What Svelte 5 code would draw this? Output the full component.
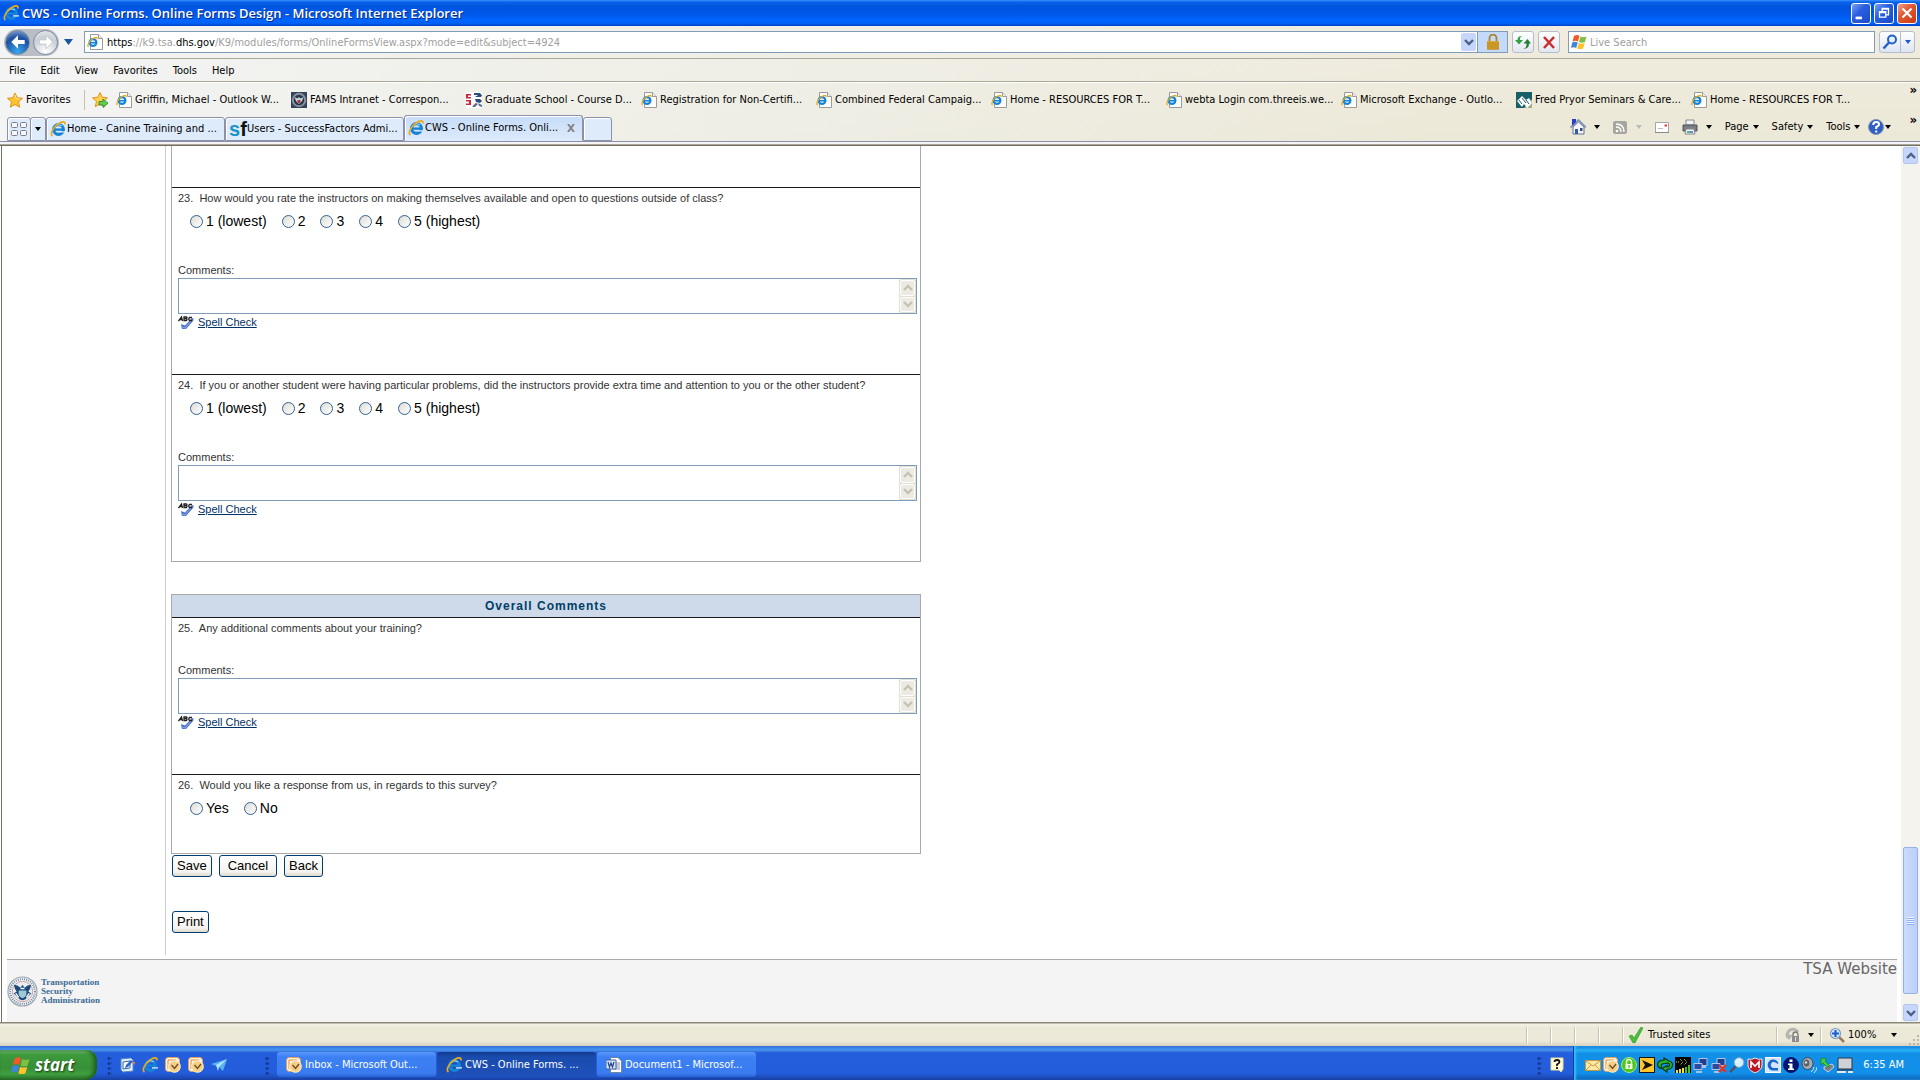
<script>
  const menus = ['File', 'Edit', 'View', 'Favorites', 'Tools', 'Help'];
  const favorites = [
    ['page', 'Griffin, Michael - Outlook W...'],
    ['seal', 'FAMS Intranet - Correspon...'],
    ['grad', 'Graduate School - Course D...'],
    ['page', 'Registration for Non-Certifi...'],
    ['page', 'Combined Federal Campaig...'],
    ['page', 'Home - RESOURCES FOR T...'],
    ['page', 'webta Login com.threeis.we...'],
    ['page', 'Microsoft Exchange - Outlo...'],
    ['pryor', 'Fred Pryor Seminars & Care...'],
    ['page', 'Home - RESOURCES FOR T...']
  ];
  const tabs = [
    ['ie', 'Home - Canine Training and ...', false],
    ['sf', 'Users - SuccessFactors Admi...', false],
    ['ie', 'CWS - Online Forms. Onli...', true]
  ];
  const tasks = [
    ['outlook', 'Inbox - Microsoft Out...', false],
    ['ie', 'CWS - Online Forms. ...', true],
    ['word', 'Document1 - Microsof...', false]
  ];
  const scale = ['1 (lowest)', '2', '3', '4', '5 (highest)'];
  const ratings = [
    { n: 23, text: 'How would you rate the instructors on making themselves available and open to questions outside of class?', options: scale, comments: true },
    { n: 24, text: 'If you or another student were having particular problems, did the instructors provide extra time and attention to you or the other student?', options: scale, comments: true }
  ];
  const overall = [
    { n: 25, text: 'Any additional comments about your training?', options: [], comments: true },
    { n: 26, text: 'Would you like a response from us, in regards to this survey?', options: ['Yes', 'No'], comments: false }
  ];
  const tray = ['mail', 'outlook', 'lock', 'norton', 'sync', 'signal', 'net', 'netoff', 'lens', 'shield', 'swirl', 'info', 'sound', 'eject', 'screen'];
</script>

{#snippet icon(kind)}
  <svg class="icon" viewBox="0 0 16 16" aria-hidden="true">
    {#if kind === 'ie'}
      <circle cx="8.5" cy="8.5" r="4.9" fill="none" stroke="#1583d8" stroke-width="3.2" />
      <path d="M4 8.6h10" stroke="#1583d8" stroke-width="2.4" />
      <path d="M10 10.300h6v1.200h-6z" fill="#eaf3fc" />
      <path d="M5 5.5Q8 2.5 12 5" stroke="#7fd0ff" stroke-width="1.2" fill="none" />
      <path d="M2.5 15C-.5 13 3 6.500 8 3S15.500.5 14.800 3.500" fill="none" stroke="#e9ab1c" stroke-width="1.7" />
    {:else if kind === 'page'}
      <path d="M3.500.5h8l4 4v11h-12z" fill="#fff" stroke="#9a9a9a" />
      <path d="M11.500.5v4h4" fill="#eee" stroke="#9a9a9a" />
      <circle cx="6" cy="8.500" r="3.400" fill="none" stroke="#1583d8" stroke-width="2.200" />
      <path d="M3 8.700h6.500" stroke="#1583d8" stroke-width="1.700" />
      <path d="M1.500 13C-.5 11.500 3 6 6 4.500S10.500 3 10 5" fill="none" stroke="#e9ab1c" stroke-width="1.300" />
    {:else if kind === 'seal'}
      <path fill="#34435e" d="M0 0h16v16H0z" /><circle cx="8" cy="8" r="7.200" fill="#8b929c" />
      <circle cx="8" cy="8" r="5.200" fill="#26364f" />
      <path d="M3.500 5l3 1.500L8 5l1.500 1.500 3-1.500-1.500 4-3 3-3-3z" fill="#cfd5dc" /><path d="M6.500 8h3v2L8 11.500 6.500 10z" fill="#a33" />
    {:else if kind === 'grad'}
      <path fill="#fff" d="M0 0h16v16H0z" /><path d="M0 2h5v1.500H2v1.500h3v1.500H0zM0 8h5v5H0v-1.500h3V9.500H0z" fill="#c8283c" />
      <path d="M8 1h6l2 2.500-1 1.500H9l3-2H8zM9 7h5l2 2-2 2-4-1z" fill="#2b4c7c" /><path d="M6 15l4-4 2 1-3 3zM12 11l4 2v2l-3-1z" fill="#5b6f96" /><path d="M7 14l3-3" stroke="#d55" />
    {:else if kind === 'pryor'}
      <path fill="#176067" d="M0 0h16v16H0z" /><path fill="#a9ab80" d="M8 16l8-9v9z" /><path d="M1 9l5-5 4 4 3-2 3 5-5 5-3-4-2 3z" fill="#fff" /><path d="M3 8l3 4m0-6l4 5m0-3l3 4" stroke="#176067" />
    {:else if kind === 'outlook'}
      <rect x=".5" y=".5" width="14" height="14" rx="3" fill="#fff3dd" stroke="#e2a060" />
      <path d="M3 12V3h8" fill="none" stroke="#e08838" />
      <circle cx="9.500" cy="9.500" r="5.800" fill="#f6cf86" stroke="#fdf2d8" /><path d="M6.500 8l3 3.500L13 7" fill="none" stroke="#705022" stroke-width="1.400" />
    {:else if kind === 'word'}
      <path d="M4.500.5H12l3.500 3.500v11.500h-11z" fill="#fff" stroke="#7181a8" /><path d="M8 6h6M8 8h6M7 10h7M7 12h7" stroke="#8595b5" />
      <path d="M0 3h10v9H0z" fill="#dce6f7" stroke="#41619e" /><path d="M2 5l1.500 5L5 6l1.500 4L8 5" fill="none" stroke="#234b91" stroke-width="1.300" />
    {:else if kind === 'mail'}
      <path d="M.5 3.500h15v10H.5z" fill="#fbe8a5" stroke="#c09644" /><path d="M1 4l7 5 7-5M1 13l5-5m9 5l-5-5" fill="none" stroke="#cc9b45" />
    {:else if kind === 'lock'}
      <circle cx="8" cy="8" r="7.500" fill="#4bc71f" stroke="#a6e777" /><path d="M5.500 7V5a2.500 2.500 0 015 0v2" stroke="#eefbd8" stroke-width="1.500" fill="none" /><path d="M4.500 7h7v5h-7z" fill="#f2ffe0" /><path d="M8 8v3" stroke="#398b18" />
    {:else if kind === 'norton'}
      <path fill="#151515" d="M0 0h16v16H0z" /><path d="M1 1h14v14H1z" fill="#ffc52a" /><path d="M3 3l11 5-11 5 3-5z" fill="#111" />
    {:else if kind === 'sync'}
      <path d="M3 11.500q-4-3-1.500-6.500Q3 3 7 3V1l5 3q4 1 3.500 4.500Q15 12 10 12.500V15L5 11.500l5-3v1.500q3-.5 2.500-2.500T8 6.500Q3 6.500 4.500 10z" fill="#29b02f" stroke="#063b0e" stroke-width="1.200" />
    {:else if kind === 'signal'}
      <path fill="#050505" d="M0 0h16v16H0z" /><path d="M1 5h3m1-3l3 3-3 3M9 2l3 3-3 3" stroke="#d5e23c" stroke-dasharray="1 1" fill="none" /><path d="M2 16v-3m3 3v-4m3 4v-5" stroke="#f4e52c" stroke-width="2" /><path d="M11 16v-6m3 6V8" stroke="#43c22f" stroke-width="2" />
    {:else if kind === 'net' || kind === 'netoff'}
      <path d="M6 1.500h8v7H6z" fill="#203e94" stroke="#b4c4db" /><path d="M1 6.500h8v6H1z" fill="#284ba3" stroke="#b4c4db" /><path d="M3 15h6M9 10h4" stroke="#d2d8e4" stroke-width="1.600" />
      {#if kind === 'netoff'}<path d="M8 8l7 7m0-7l-7 7" stroke="#e43124" stroke-width="2.200" />{/if}
    {:else if kind === 'lens'}
      <path d="M1 15l6-6" stroke="#48556b" stroke-width="2.500" /><circle cx="10" cy="5.500" r="4.800" fill="#d4f0ff" stroke="#86a6c2" /><path d="M7.500 5q1-2.500 3-2.500" stroke="#fff" fill="none" />
    {:else if kind === 'shield'}
      <path d="M1 2q4 1 7-1 3 2 7 1v6q0 5-7 8-7-3-7-8z" fill="#b91824" stroke="#e9e9e9" /><path d="M4 11V5l4 4 4-4v6" fill="none" stroke="#fff" stroke-width="1.700" />
    {:else if kind === 'swirl'}
      <rect x=".5" y=".5" width="15" height="15" fill="#d3e6fb" stroke="#fff" /><path d="M13.500 7A5.500 5.500 0 108 13.500h5V11H9a3 3 0 112-5z" fill="#1d68cf" />
    {:else if kind === 'info' || kind === 'help'}
      <circle cx="8" cy="8" r="7.500" fill={kind === 'info' ? '#06156d' : '#2f5ec4'} stroke={kind === 'info' ? '#06156d' : '#8595b5'} />
      {#if kind === 'info'}<path d="M6.500 2.500h3v2.500h-3zM5 6.500h4.500v5H11V13H5v-1.500h1.500V8H5z" fill="#fff" />
      {:else}<path d="M5.200 6q0-3 3-3 2.800 0 2.800 2.300Q11 7 8.200 8v2M8.200 11.500v2" fill="none" stroke="#fff" stroke-width="2" />{/if}
    {:else if kind === 'sound'}
      <ellipse cx="6.500" cy="6.500" rx="5.500" ry="6" fill="#a8adb5" stroke="#3c434d" /><ellipse cx="5.500" cy="6" rx="2.800" ry="3.500" fill="#59616c" /><circle cx="5" cy="5.500" r="1.200" fill="#dde" /><path d="M10 15q3-2 3-5m0 6q3-3 3-6" stroke="#cfe1f5" fill="none" />
    {:else if kind === 'eject'}
      <path d="M5 10l8-3 2 3-6 5-4-3z" fill="#777f87" stroke="#ccd" /><path d="M2 1l6 1-2 2 5 5-3 1-4-4-2 2z" fill="#3bd13c" stroke="#16701e" stroke-width=".6" />
    {:else if kind === 'screen'}
      <path d="M1 1h14v11H1z" fill="#ced1d5" stroke="#26364f" /><path d="M0 15h9m2 0h5" stroke="#e7e7e7" stroke-width="2" /><path d="M0 13h16" stroke="#26364f" />
    {:else if kind === 'star'}
      <path d="M8 1l2.200 4.700 5.300.6-4 3.500 1.200 5.400L8 12.500l-4.700 2.700 1.200-5.400-4-3.500 5.300-.6z" fill="#ffc32d" stroke="#db8b17" stroke-width=".9" /><path d="M8 3l1 3.500 3.500.5" stroke="#ffeaa1" fill="none" />
    {:else if kind === 'addstar'}
      <path d="M8 .5l2.200 4.700 5.300.6-4 3.500 1.200 5.400L8 12l-4.700 2.700 1.200-5.400-4-3.500 5.300-.6z" fill="#ffd04a" stroke="#db8b17" stroke-width=".9" /><path d="M7 9.500h4V7l5 4.200-5 4.300v-2.500H7z" fill="#63cf4e" stroke="#24801d" stroke-width=".8" />
    {:else if kind === 'winflag'}
      <path d="M3 2q3-2 5.500 0L7 7.500Q4.500 6 1.500 7.500z" fill="#f05a28" /><path d="M9.500 2.500q3 1.500 6 0L14 8q-3 1.500-6 0z" fill="#7cc142" /><path d="M1.200 8.500Q4 7 6.700 8.500L5.200 14q-2.500-1.500-5.200 0z" fill="#3d85dd" /><path d="M7.700 9q3 1.500 6 0l-1.500 5.500q-3 1.500-6 0z" fill="#fcc32c" />
    {:else if kind === 'padlock'}
      <path d="M4.500 7V4a3.500 3.500 0 017 0v3" fill="none" stroke="#a8842c" stroke-width="1.800" /><path d="M2 7h12v8.500H2z" fill="#dca934" /><path d="M2 9h12M2 11h12M2 13h12M2 15h12" stroke="#b98318" />
    {:else if kind === 'refresh'}
      <path d="M8 2Q5 2 5 5v1h3L4 10.500 0 6h2.500Q2.500 1.500 8 2z" fill="#35a042" /><path d="M8 14.500q3.500 0 3.500-4V9.500H8.500l4-4.500 3.500 4.500h-2q0 6-6 5z" fill="#257d32" />
    {:else if kind === 'stop'}
      <path d="M3 3l10 11M13 3L3 14" stroke="#c92d2d" stroke-width="2.500" />
    {:else if kind === 'search'}
      <circle cx="10" cy="5.500" r="4" fill="#e4f0ff" stroke="#2360ce" stroke-width="2" /><path d="M7 8.500l-5.500 6" stroke="#2360ce" stroke-width="2.500" />
    {:else if kind === 'home'}
      <path d="M3 8v7h11V8L8.500 3z" fill="#f3f5f9" stroke="#64728e" /><path d="M.5 8.500L8.500 1 16 8.500" fill="none" stroke="#8796b4" stroke-width="1.800" /><path d="M2 0h4v3L3 6H2z" fill="#2d3fc1" /><path d="M5 10h3v5H5z" fill="#3159b5" /><path d="M10 9h2.500v3H10z" fill="#3b4b76" />
    {:else if kind === 'rss'}
      <rect x="1" y="2" width="14" height="13" rx="2" fill="#a6a69f" /><circle cx="5" cy="12" r="1.300" fill="#fff" /><path d="M4 8q5 0 5 5M4 5q8 0 8 8" fill="none" stroke="#fff" stroke-width="1.400" />
    {:else if kind === 'letter'}
      <path d="M1.500 3.500h13v10h-13z" fill="#fff" stroke="#a6a6b0" /><path d="M10.500 5.500h2.500v2h-2.500z" fill="#d53a3a" /><path d="M4 9.500h5" stroke="#bbb" /><path d="M1 13.500h14" stroke="#888" />
    {:else if kind === 'printer'}
      <path d="M4 1h8v5H4z" fill="#f4f4f8" stroke="#8a8a92" /><path d="M1 6h14v6H1z" fill="#7b7e85" stroke="#4e5158" /><path d="M4 10h8l1 5H3z" fill="#eef5ff" stroke="#888" /><path d="M5 13h3" stroke="#3a9a4a" stroke-width="1.500" /><path d="M8 13h3" stroke="#3468c4" stroke-width="1.500" />
    {:else if kind === 'desktop'}
      <path d="M2 2l10-1 2 2v11L4 15l-2-2z" fill="#e5effb" stroke="#568bc6" /><path d="M4 5l7-1v7l-7 1z" fill="#fff" stroke="#3267a8" /><path d="M6 11l1-3 5-5 2 1.500-5 5.500z" fill="#2d67c5" /><path d="M13 5h3v3z" fill="#ee7b32" />
    {:else if kind === 'plane'}
      <path d="M0 7L16 2 12 14 8 10z" fill="#57b4f4" /><path d="M5 8l11-6-8 8-1 4z" fill="#b6e4ff" />
    {:else if kind === 'note'}
      <path d="M2 1h12v11l-2 3-2-2H2z" fill="#fffbd8" stroke="#e4dc9c" /><path d="M5.500 5q0-2 2.500-2t2.500 2Q10.500 6 8 7.500V9M8 10v2" stroke="#111" stroke-width="1.800" fill="none" />
    {:else if kind === 'check'}
      <path d="M1 9l3-1 2 3L13 0l2 1L7 16H5z" fill="#4dbb3d" stroke="#2a9a27" stroke-width=".6" />
    {:else if kind === 'zone'}
      <path d="M3 11a5.500 5.500 0 0110-6" fill="none" stroke="#b5b5b0" stroke-width="3" /><path d="M0 7l4 6 4-5z" fill="#b5b5b0" /><path d="M8 10V7.500a2.500 2.500 0 015 0V10" fill="none" stroke="#777" stroke-width="1.300" /><path d="M7 9h7v6H7z" fill="#8d8d8d" /><path d="M10.500 10v4" stroke="#ddd" />
    {:else if kind === 'zoom'}
      <path d="M9 9l6 6" stroke="#9b7c58" stroke-width="2.500" /><circle cx="6.500" cy="6.500" r="5" fill="#d8edff" stroke="#7e9abf" stroke-width="1.200" /><path d="M6.500 3v7M3 6.500h7" stroke="#1960ce" stroke-width="2.200" />
    {:else if kind === 'quick'}
      <g fill="#f5f7fb" stroke="#7c7f91"><rect x=".5" y="1.500" width="6" height="5" rx="1" /><rect x="9.500" y="1.500" width="6" height="5" rx="1" /><rect x=".5" y="9.500" width="6" height="5" rx="1" /><rect x="9.500" y="9.500" width="6" height="5" rx="1" /></g>
    {:else if kind === 'spell'}
      <path d="M3 10l4 1.500L14 4l1.500.5v2L8 15H4z" fill="#4d75ca" /><path d="M3 13l4 1 7-8" fill="none" stroke="#8fa9e4" />
      <path d="M.5 7l3-4 1 4M2 5.500h2.500M6 3v3.500h2.500q1-1 0-1.800H6h2.500q1-1 0-1.700zM14 3.500h-2.500q-1.500 1.500 0 3H14" fill="none" stroke="#222" stroke-width="1.300" />
    {/if}
  </svg>
{/snippet}

{#snippet chevron(dir)}
  <svg class="chev" viewBox="0 0 10 8" aria-hidden="true"><path d={dir === 'up' ? 'M1 6l4-4 4 4' : 'M1 2l4 4 4-4'} fill="none" stroke="currentColor" stroke-width="2.400" /></svg>
{/snippet}

{#snippet caret()}
  <svg class="caret" viewBox="0 0 6 4" aria-hidden="true"><path d="M0 0h6L3 4z" fill="currentColor" /></svg>
{/snippet}

{#snippet question(q)}
  <section class="question">
    <p class="ask" id={'q' + q.n}>{q.n}.&nbsp; {q.text}</p>
    {#if q.options.length}
      <div class="options" role="radiogroup" aria-labelledby={'q' + q.n}>
        {#each q.options as option}
          <label><input type="radio" name={'rating' + q.n} value={option} />{option}</label>
        {/each}
      </div>
    {/if}
    {#if q.comments}
      <div class="comments">
        <label for={'c' + q.n}>Comments:</label>
        <div class="field">
          <textarea id={'c' + q.n}></textarea>
          <div class="steps">
            <button type="button" disabled aria-label="Scroll up">{@render chevron('up')}</button>
            <button type="button" disabled aria-label="Scroll down">{@render chevron('down')}</button>
          </div>
        </div>
        <a class="spell" href="#spell">{@render icon('spell')}<span>Spell Check</span></a>
      </div>
    {/if}
  </section>
{/snippet}

<div class="window">
  <header class="title">
    {@render icon('ie')}
    <h1>CWS - Online Forms. Online Forms Design - Microsoft Internet Explorer</h1>
    <div class="controls">
      <button aria-label="Minimize"><svg viewBox="0 0 20 20"><path d="M4 14h7v3H4z" fill="#fff" /></svg></button>
      <button aria-label="Restore"><svg viewBox="0 0 20 20"><path d="M8 8V5h7v7h-3M8 5.500h7M5 8.500h7v6H5zM5 9.500h7" fill="none" stroke="#fff" stroke-width="1.500" /></svg></button>
      <button class="close" aria-label="Close"><svg viewBox="0 0 20 20"><path d="M5 5l10 10M15 5L5 15" stroke="#fff" stroke-width="2.400" /></svg></button>
    </div>
  </header>

  <div class="chrome">
    <div class="address">
      <div class="travel">
        <button class="go back" aria-label="Back"><svg viewBox="0 0 24 24"><path d="M12 4l-8 8 8 8v-5.500h8v-5h-8z" fill="#fff" /></svg></button>
        <button class="go next" aria-label="Forward"><svg viewBox="0 0 24 24"><path d="M12 4l8 8-8 8v-5.500H4v-5h8z" fill="#fff" stroke="#bcc3cc" /></svg></button>
      </div>
      <button class="recent" aria-label="Recent pages">{@render caret()}</button>
      <div class="url">
        {@render icon('page')}
        <a href="#address" class="link"><b>https</b>://k9.tsa.<b>dhs.gov</b>/K9/modules/forms/OnlineFormsView.aspx?mode=edit&amp;subject=4924</a>
        <button class="drop" aria-label="Address history">{@render chevron('down')}</button>
        <button class="secure" aria-label="Security report">{@render icon('padlock')}</button>
      </div>
      <button class="tool" aria-label="Refresh">{@render icon('refresh')}</button>
      <button class="tool" aria-label="Stop">{@render icon('stop')}</button>
      <div class="live">{@render icon('winflag')}<input type="text" placeholder="Live Search" aria-label="Live Search" /></div>
      <div class="find">
        <button aria-label="Search">{@render icon('search')}</button><button class="slim" aria-label="Search options">{@render caret()}</button>
      </div>
    </div>

    <nav class="menus">
      {#each menus as m}<button>{m}</button>{/each}
    </nav>

    <nav class="favs">
      <button class="favbtn">{@render icon('star')}Favorites</button>
      <button class="add" aria-label="Add to Favorites Bar">{@render icon('addstar')}</button>
      {#each favorites as [kind, label]}
        <a class="fav" href="#favorite">{@render icon(kind)}<span>{label}</span></a>
      {/each}
      <button class="more" aria-label="More favorites">»</button>
    </nav>

    <div class="tabrow">
      <div class="tabs">
        <button class="tab quick" aria-label="Quick tabs">{@render icon('quick')}</button>
        <button class="tab list" aria-label="Tab list">{@render caret()}</button>
        {#each tabs as [kind, label, active]}
          <div class="tab wide" class:active>
            {#if kind === 'sf'}<span class="sf" aria-hidden="true">s<b>f</b></span>{:else}{@render icon(kind)}{/if}
            <a href="#tab">{label}</a>
            {#if active}<button class="x" aria-label="Close tab"><svg viewBox="0 0 8 8"><path d="M1 0l6 8M7 0L1 8" stroke="#858585" stroke-width="2" /></svg></button>{/if}
          </div>
        {/each}
        <button class="tab new" aria-label="New tab"></button>
      </div>
      <div class="commands">
        <button aria-label="Home page">{@render icon('home')}{@render caret()}</button>
        <button class="dim" aria-label="Feeds">{@render icon('rss')}{@render caret()}</button>
        <button aria-label="Read mail">{@render icon('letter')}</button>
        <button aria-label="Print">{@render icon('printer')}{@render caret()}</button>
        <button class="word">Page{@render caret()}</button>
        <button class="word">Safety{@render caret()}</button>
        <button class="word">Tools{@render caret()}</button>
        <button class="word help" aria-label="Help">{@render icon('help')}{@render caret()}</button>
        <button class="more" aria-label="More commands">»</button>
      </div>
    </div>
  </div>

  <div class="view">
    <main>
      <div class="columns">
        <div class="side"></div>
        <form class="survey">
          <div class="box rest">
            <div class="remnant"></div>
            {#each ratings as q}{@render question(q)}{/each}
          </div>
          <div class="box">
            <h2>Overall Comments</h2>
            {#each overall as q}{@render question(q)}{/each}
          </div>
          <div class="actions">
            <button type="button">Save</button><button type="button" class="mid">Cancel</button><button type="button">Back</button>
          </div>
          <div class="actions print"><button type="button">Print</button></div>
        </form>
      </div>
      <footer>
        <div class="brand">
          <svg viewBox="0 0 32 32" aria-hidden="true">
            <circle cx="16" cy="16" r="15" fill="#f2f4f6" stroke="#9ba5ad" stroke-width="1.200" />
            <circle cx="16" cy="16" r="12.800" fill="none" stroke="#6487a4" stroke-width="2" stroke-dasharray="1 1.200" />
            <circle cx="16" cy="16" r="10.500" fill="#e8eef2" stroke="#d29b9b" />
            <path d="M7 9q4 0 7 3l2-3 2 3q3-3 7-3-1 5-3 7l3 2-6 6q-3 2-6 0l-6-6 3-2Q8 14 7 9z" fill="#1d4a7a" />
            <path d="M12 15h8v4q-1 3-4 4-3-1-4-4z" fill="#9fc9d6" /><path d="M9 18l3 4m11-4l-3 4M14 13h4" stroke="#fff" stroke-width="1.500" />
          </svg>
          <p>Transportation<br />Security<br />Administration</p>
        </div>
        <a href="#tsa">TSA Website</a>
      </footer>
    </main>
    <div class="scroll">
      <button aria-label="Scroll page up">{@render chevron('up')}</button>
      <div class="thumb"><i></i></div>
      <button aria-label="Scroll page down">{@render chevron('down')}</button>
    </div>
  </div>

  <div class="status">
    <span class="cell"></span><span class="cell"></span><span class="cell"></span><span class="cell"></span>
    <span class="cell zone">{@render icon('check')}Trusted sites</span>
    <button class="cell prot" aria-label="Protection">{@render icon('zone')}{@render caret()}</button>
    <button class="cell level">{@render icon('zoom')}<span>100%</span>{@render caret()}</button>
    <svg class="grip" viewBox="0 0 12 12" aria-hidden="true"><path d="M9 1h2v2H9zM9 5h2v2H9zM9 9h2v2H9zM5 5h2v2H5zM5 9h2v2H5zM1 9h2v2H1z" fill="#bcb8a5" /></svg>
  </div>

  <div class="taskbar">
    <button class="start">{@render icon('winflag')}<span>start</span></button>
    <div class="dots"></div>
    <div class="launch">
      {#each ['desktop', 'ie', 'outlook', 'outlook', 'plane'] as k}<button aria-label={'Launch ' + k}>{@render icon(k)}</button>{/each}
    </div>
    <div class="dots"></div>
    <div class="tasks">
      {#each tasks as [kind, label, on]}<button class:on>{@render icon(kind)}<span>{label}</span></button>{/each}
    </div>
    <div class="dots"></div>
    <button class="note" aria-label="Help note">{@render icon('note')}</button>
    <div class="tray">
      {#each tray as k}{@render icon(k)}{/each}
      <time>6:35 AM</time>
    </div>
  </div>
</div>

<style>
  :global(body) { margin: 0; background: #fff; }
  .window {
    display: flex; flex-direction: column; min-height: 100vh; overflow: hidden;
    font: 11px/14px "DejaVu Sans Condensed", "DejaVu Sans", sans-serif; color: #000;
  }
  .window * { box-sizing: border-box; }
  button { font: inherit; color: inherit; background: none; border: 0; padding: 0; margin: 0; display: flex; align-items: center; justify-content: center; white-space: nowrap; }
  a { color: inherit; text-decoration: none; }
  svg { display: block; flex: none; }
  .icon { width: 16px; height: 16px; }
  .caret { width: 6px; height: 4px; }
  .chev { width: 10px; height: 8px; color: #4d6185; }

  .title {
    display: flex; align-items: center; height: 26px; padding: 0 3px; gap: 3px; color: #fff;
    background: linear-gradient(#3a91ff 0, #0a62ea 8%, #0055e0 25%, #0058ea 55%, #0066ff 80%, #0060f4 90%, #0042c8);
  }
  h1 { flex: 1; margin: 0; font: 600 13px/18px "Open Sans", sans-serif; text-shadow: 1px 1px #0b2a84; }
  .controls { display: flex; gap: 3px; }
  .controls button { width: 20px; height: 21px; border: 1px solid #fff; border-radius: 3px; background: linear-gradient(135deg, #7ca2f2, #2a5fe0 40%, #1c49c6); }
  .controls .close { background: linear-gradient(135deg, #f2a18a, #e25a34 40%, #c93b12); }
  .controls svg { width: 18px; height: 18px; }

  .chrome { background: linear-gradient(to right, rgba(243, 244, 244, 1), rgba(240, 240, 234, .9) 30%, rgba(236, 233, 216, 0) 75%), linear-gradient(#f0ede0, #ebe8d7); border-bottom: 1px solid #716f64; }
  .address { display: flex; align-items: center; height: 33px; padding: 0 5px 0 4px; border-bottom: 1px solid #aca899; }
  .travel { display: flex; gap: 3px; padding: 1px; border-radius: 16px; background: #b9bdc4; }
  .go { width: 25px; height: 25px; border-radius: 50%; border: 1px solid #7e8ba2; }
  .go svg { width: 20px; height: 20px; }
  .back { background: radial-gradient(circle at 50% 90%, #37a6ee, #1c4f9f 60%, #9ab6dd); }
  .next { background: radial-gradient(circle at 50% 90%, #fff, #c9ced6 60%, #eef0f3); }
  .recent { width: 25px; padding-right: 7px; color: #15569c; }
  .recent .caret, .recent :global(svg) { width: 9px; height: 6px; }
  .url { flex: 1; display: flex; align-items: center; height: 22px; border: 1px solid #7f9db9; background: #fff; padding-left: 2px; }
  .link { flex: 1; padding: 2px 0 0 4px; color: #a0a0a0; }
  .link b { font-weight: normal; color: #000; }
  .drop { width: 15px; height: 18px; background: #c6d6fb; border-radius: 2px; margin-right: 1px; }
  .secure { width: 30px; align-self: stretch; background: #c5dafb; border-left: 1px solid #7f9db9; }
  .tool { width: 22px; height: 22px; margin-left: 4px; border: 1px solid #b5bccb; border-radius: 3px; background: linear-gradient(#fff, #e2e6ee); }
  .live { display: flex; align-items: center; width: 307px; height: 22px; margin-left: 8px; border: 1px solid #7f9db9; background: #fff; padding-left: 2px; gap: 3px; }
  .live input { flex: 1; min-width: 0; border: 0; padding: 2px 0 0; background: none; font: inherit; outline: 0; }
  .live input::placeholder { color: #a0a0a0; opacity: 1; }
  .find { display: flex; height: 22px; margin-left: 4px; border: 1px solid #b5bccb; border-radius: 3px; background: linear-gradient(#fff, #dde4f2); color: #1c5bc8; }
  .find button { width: 20px; }
  .find .slim { width: 14px; border-left: 1px solid #b5bccb; }

  .menus { display: flex; gap: 15px; height: 23px; padding: 2px 0 0 9px; border-bottom: 1px solid #aca899; box-shadow: 0 1px #fff; }
  .favs { display: flex; align-items: center; height: 33px; padding: 0 3px 0 7px; margin-top: 1px; }
  .favbtn { width: 78px; height: 20px; gap: 3px; justify-content: flex-start; border-right: 1px solid #c5c2b2; }
  .add { width: 31px; padding-left: 7px; justify-content: flex-start; }
  .fav { flex: 0 1 175px; min-width: 0; display: flex; align-items: center; gap: 3px; overflow: hidden; white-space: nowrap; }
  .more { margin-left: auto; align-self: flex-start; font-size: 13px; font-weight: bold; }

  .tabrow { display: flex; align-items: flex-end; justify-content: space-between; height: 29px; padding: 0 3px 3px 7px; border-bottom: 1px solid #aca899; background: linear-gradient(#fff0 25px, #8d8fa5 25px, #8d8fa5 26px, #f4f4f6 26px); }
  .tabs { display: flex; align-items: flex-end; }
  .tab { height: 24px; border: 1px solid #8d90a8; border-radius: 3px 3px 0 0; background: #deebfa; box-shadow: inset 1px 1px #fff; }
  .quick { width: 24px; }
  .list { width: 16px; margin-left: -1px; }
  .wide { width: 179px; display: flex; align-items: center; padding-left: 3px; gap: 1px; white-space: nowrap; }
  .wide a { flex: 1; overflow: hidden; }
  .active { height: 26px; background: linear-gradient(#c7dcf9, #dceafb); border-bottom-color: #dceafb; }
  .x { padding-right: 7px; }
  .x svg { width: 8px; height: 8px; }
  .new { width: 29px; }
  .sf { width: 17px; font: bold 20px/18px "Liberation Sans", sans-serif; color: #1a93c9; }
  .sf b { color: #111; }
  .commands { display: flex; align-items: center; height: 28px; gap: 12px; }
  .commands button { gap: 8px; }
  .commands .dim { color: #bbb; }
  .commands .word { gap: 4px; margin-left: 1px; }
  .commands .help { gap: 1px; margin-left: -4px; }
  .commands .more { margin-left: 6px; }

  .view { flex: 1; display: flex; border-left: 1px solid #716f64; margin-left: 1px; background: #fff; }
  main { flex: 1; min-width: 0; display: flex; flex-direction: column; padding: 0 4px 0 5px; }
  .columns { display: flex; padding-bottom: 4px; }
  .side { width: 159px; border-right: 1px solid #ccc; }
  .survey { flex: 1; padding: 0 0 22px 5px; font-family: "Liberation Sans", Arial, sans-serif; }
  .box { width: 100%; max-width: 750px; border: 1px solid #a9a9a9; margin-bottom: 32px; }
  .rest { border-top: 0; }
  .box + .box { margin-bottom: 1px; }
  .remnant { height: 41px; }
  .question { border-top: 1px solid #1a1a1a; padding: 3px 3px 0 6px; color: #333; font-size: 11px; line-height: 14px; }
  .ask { margin: 0; }
  .options { display: flex; gap: 15px; margin: 6px 0 0 12px; padding-bottom: 32px; color: #000; font-size: 14px; line-height: 20px; }
  .options:last-child { padding-bottom: 35px; }
  .options label { display: flex; align-items: center; gap: 3px; }
  input[type="radio"] { appearance: none; width: 13px; height: 13px; margin: 0; border: 1px solid #35628f; border-radius: 50%; background: linear-gradient(135deg, #dcdcd6, #fff); }
  .comments { padding-bottom: 41px; }
  .ask + .comments { padding-top: 28px; }
  .comments label { display: block; height: 15px; line-height: 14px; }
  .field { display: flex; height: 36px; border: 1px solid #7f9db9; background: #fff; }
  .field textarea { flex: 1; border: 0; padding: 2px; margin: 0; resize: none; outline: 0; font: inherit; background: none; overflow: hidden; }
  .steps { width: 17px; display: flex; flex-direction: column; background: #f1efe2; padding: 1px; gap: 1px; }
  .steps button { flex: 1; border: 1px solid #fff; border-radius: 2px; background: #ecebe3; box-shadow: 0 0 0 1px #e1dfd3; }
  .steps :global(.chev) { color: #c5c2b4; }
  .spell { display: inline-flex; align-items: center; gap: 4px; height: 16px; color: #003366; }
  .spell span { text-decoration: underline; }
  h2 { margin: 0; height: 22px; background: #cedaea; color: #003e67; text-align: center; font: bold 12px/22px "Liberation Sans", Arial, sans-serif; letter-spacing: 1px; }
  .actions { display: flex; gap: 7px; padding-left: 1px; }
  .actions button { height: 22px; padding: 0 4px; border: 1px solid #003c74; border-radius: 3px; background: linear-gradient(#fff, #f4f3ee 80%, #dcd8cb); font-size: 13px; line-height: 18px; }
  .actions .mid { padding: 0 8px; }
  .print { margin-top: 34px; }
  footer { flex: 1; display: flex; justify-content: space-between; align-items: flex-start; min-height: 61px; background: #f4f4f4; border-top: 1px solid #aaa; }
  footer a { font: 15px/18px "DejaVu Sans", sans-serif; color: #666; }
  .brand { display: flex; align-items: center; gap: 3px; padding-top: 15px; }
  .brand svg { width: 31px; height: 33px; }
  .brand p { margin: 0; font: bold 9px/9px "Liberation Serif", serif; color: #3b6b94; }
  .scroll { width: 19px; display: flex; flex-direction: column; align-items: center; padding: 1px 2px; background: #f4f3ee; }
  .scroll button { width: 15px; height: 17px; border: 1px solid #b2c6f2; border-radius: 2px; background: #c6d6fc; }
  .thumb { width: 15px; height: 147px; margin: auto 0 10px; border: 1px solid #98b0e8; border-radius: 2px; background: linear-gradient(to right, #cbdbff, #bccffa); display: flex; align-items: center; justify-content: center; }
  .thumb i { width: 7px; height: 8px; background: repeating-linear-gradient(#eef4fe 0 1px, #8cb0f8 1px 2px); }

  .status { display: flex; align-items: center; justify-content: flex-end; height: 24px; padding-top: 2px; background: linear-gradient(#8b8878 0, #8b8878 1px, #f4f2e5 2px, #ece9d8 6px, #ece9d8 80%, #d6d2bf); }
  .cell { display: flex; align-items: center; width: 24px; height: 17px; border-left: 1px solid #c8c4b0; box-shadow: inset 1px 0 #fff; }
  .zone { width: 154px; padding-left: 5px; gap: 4px; }
  .prot { width: 44px; padding: 0 6px 0 8px; justify-content: space-between; }
  .level { width: 86px; padding: 0 9px 0 8px; gap: 3px; }
  .level span { flex: 1; text-align: left; }
  .grip { width: 12px; height: 12px; align-self: flex-end; margin-left: 2px; }

  .taskbar { display: flex; height: 34px; color: #fff; background: linear-gradient(#3168d5 0, #3f8cf0 8%, #4993e6 12%, #245edc 20%, #245ddb 80%, #1941a5); }
  .start { width: 97px; margin-top: 4px; padding-right: 12px; gap: 5px; border-radius: 0 10px 12px 0; background: linear-gradient(#7fc17d, #3c9a3c 16%, #388f38 60%, #3fa03f 80%, #2d6f2d); box-shadow: inset -3px 0 4px #1c5c1c; }
  .start .icon, .start :global(.icon) { width: 19px; height: 19px; }
  .start span { font: italic bold 17px/22px "Open Sans", sans-serif; text-shadow: 1px 1px 2px #16400f; }
  .dots { width: 5px; height: 20px; margin: 10px 7px 0 10px; background: radial-gradient(circle, #123a94 1px, #0000 2px) 0 0 / 4px 5px; }
  .launch { display: flex; align-items: center; gap: 7px; padding-top: 4px; width: 136px; }
  .tasks { flex: 1; display: flex; gap: 1px; padding: 6px 0 3px; }
  .tasks button { width: 159px; justify-content: flex-start; gap: 3px; padding-left: 9px; border-radius: 3px; background: linear-gradient(#5b98fa, #3c80f4 20%, #3a7cf0 85%, #2a62d4); }
  .tasks .on { background: linear-gradient(#133a90, #1a4cae 20%, #1e50ba); }
  .note { width: 16px; padding-top: 4px; }
  .tray { display: flex; align-items: center; gap: 2px; margin-left: 8px; padding: 4px 16px 0 11px; border-left: 1px solid #0a3f9a; box-shadow: inset 2px 0 2px #36bdf6; background: linear-gradient(#1478dc 0, #28b2f4 12%, #1290e8 22%, #118fe9 80%, #0d62b8); }
  .tray time { margin-left: 8px; white-space: nowrap; }
</style>
